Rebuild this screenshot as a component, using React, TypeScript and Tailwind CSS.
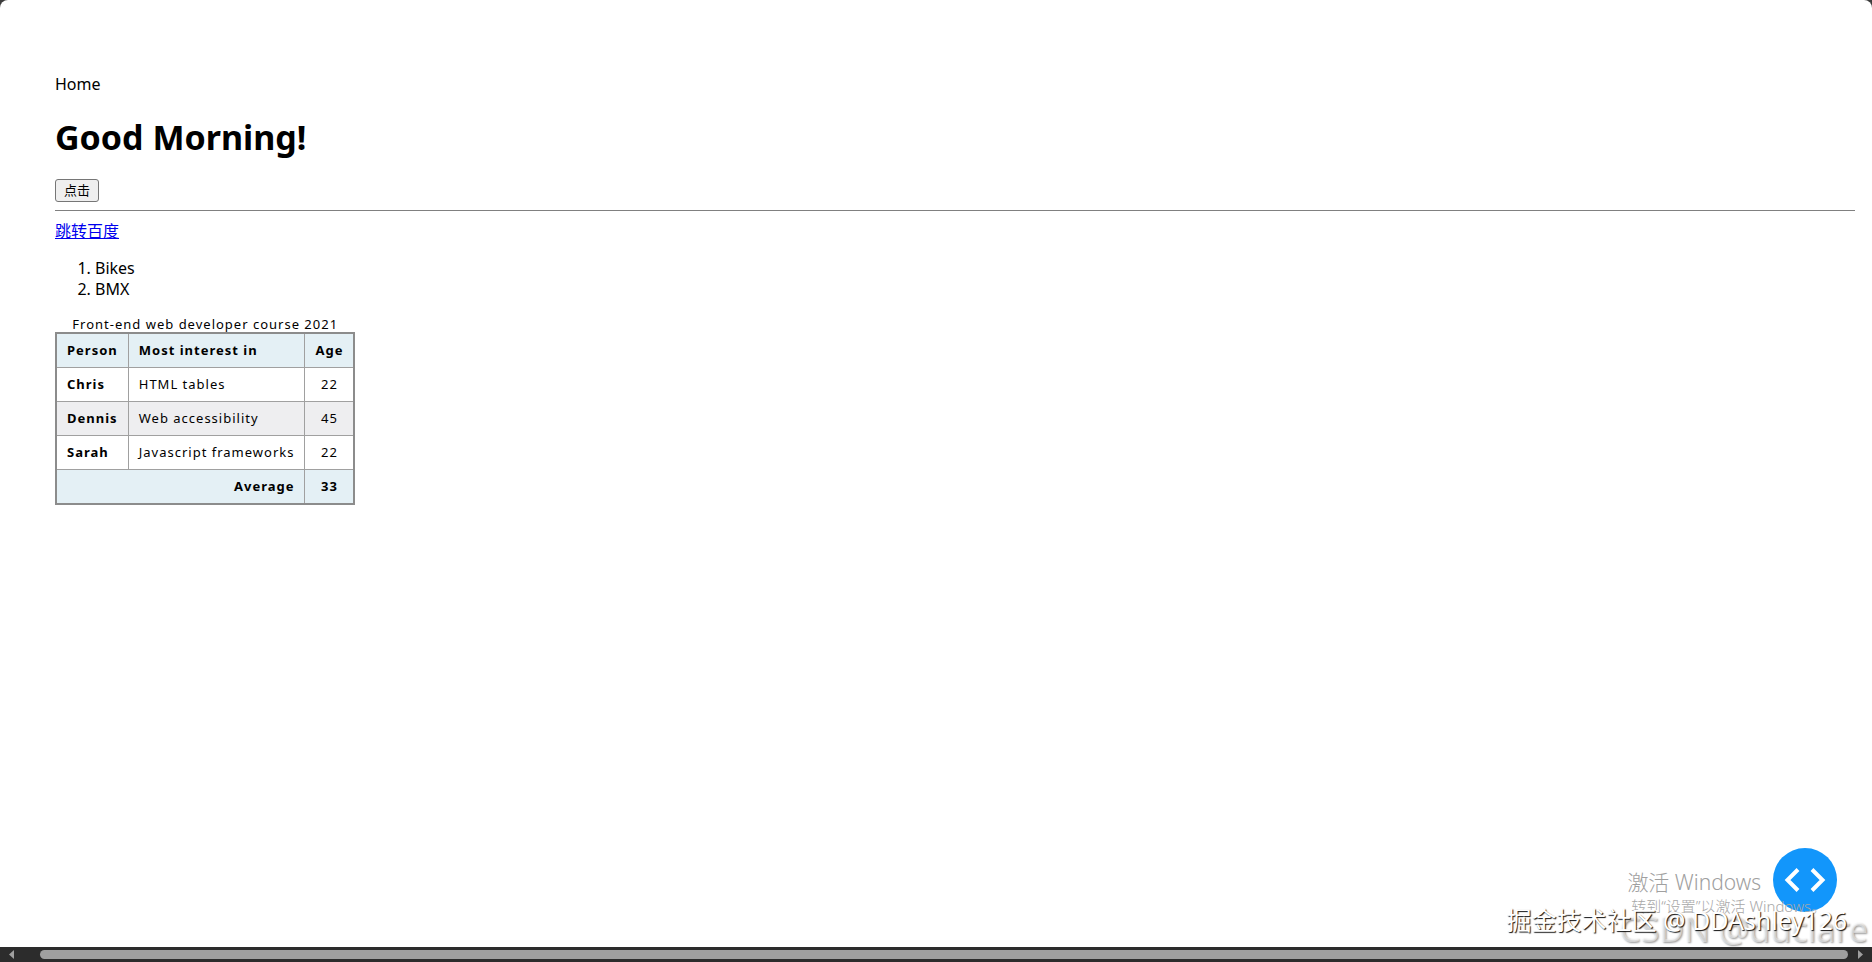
import React from 'react'

interface PersonRowProps {
    name: string,
    interest: string,
    age: number,
}

const people: PersonRowProps[] = [
    { name: 'Chris', interest: 'HTML tables', age: 22 },
    { name: 'Dennis', interest: 'Web accessibility', age: 45 },
    { name: 'Sarah', interest: 'Javascript frameworks', age: 22 },
]

const PersonRow = ({ name, interest, age }: PersonRowProps) => {
    return (
        <tr className="even:bg-[#eeeef0]">
            <th scope="row" className="border border-[#a0a0a0] px-[10px] py-2 text-left">{name}</th>
            <td className="border border-[#a0a0a0] px-[10px] py-2">{interest}</td>
            <td className="border border-[#a0a0a0] px-[10px] py-2 text-center">{age}</td>
        </tr>
    )
}

const CourseTable = () => {
    return (
        <table className="mt-4 border-collapse border-2 border-[#8c8c8c] text-[13px] leading-[17px] tracking-[1px]">
            <caption className="leading-4">Front-end web developer course 2021</caption>
            <thead className="bg-[#e4f0f5]">
                <tr>
                    <th scope="col" className="border border-[#a0a0a0] px-[10px] py-2 text-left">Person</th>
                    <th scope="col" className="border border-[#a0a0a0] px-[10px] py-2 text-left">Most interest in</th>
                    <th scope="col" className="border border-[#a0a0a0] px-[10px] py-2 text-center">Age</th>
                </tr>
            </thead>
            <tbody>
                {people.map((person) => (
                    <PersonRow key={person.name} {...person} />
                ))}
            </tbody>
            <tfoot className="bg-[#e4f0f5]">
                <tr>
                    <th scope="row" colSpan={2} className="border border-[#a0a0a0] px-[10px] py-2 text-right">Average</th>
                    <td className="border border-[#a0a0a0] px-[10px] py-2 text-center font-bold">33</td>
                </tr>
            </tfoot>
        </table>
    )
}

const Watermarks = () => {
    return (
        <div className="pointer-events-none absolute inset-0 whitespace-nowrap">
            <p className="absolute right-[111px] bottom-[51px] text-[21px] leading-7 font-light text-[#a0a0a0]">激活 Windows</p>
            <p className="absolute right-[46px] bottom-[31px] text-[15px] leading-5 font-light text-[#a8a8a8]">转到“设置”以激活 Windows。</p>
            <p className="absolute right-1 bottom-0 text-[34px] leading-9 text-white/50 [text-shadow:1px_1px_2px_#999999]">CSDN @duclare</p>
            <p className="absolute right-[25px] bottom-[11px] text-[25px] leading-8 text-white [text-shadow:1px_1px_1px_#111111]">掘金技术社区 @ DDAshley126</p>
        </div>
    )
}

const Scrollbar = () => {
    return (
        <div className="flex h-[15px] items-center bg-[#2c2c2c] px-[9px]">
            <svg className="h-[9px] w-[5px]" viewBox="0 0 5 9" fill="#9f9f9f"><path d="M5 0v9L0 4.5z" /></svg>
            <div className="mr-[10px] ml-[26px] h-[9px] flex-1 rounded-full bg-[#9f9f9f]" />
            <svg className="h-[9px] w-[5px]" viewBox="0 0 5 9" fill="#9f9f9f"><path d="M0 0v9l5-4.5z" /></svg>
        </div>
    )
}

const App = () => {
    return (
        <div className="flex min-h-screen flex-col bg-[#3c3c3c] font-['Noto_Sans','Noto_Sans_CJK_SC',sans-serif] text-base leading-[21px] text-black">
            <div className="relative flex-1 rounded-t-lg bg-white">
                <main className="pt-[74px] pr-[17px] pl-[55px]">
                    <div>Home</div>
                    <h1 className="mt-[21px] text-[34px] leading-[43px] font-bold">Good Morning!</h1>
                    <button type="button" className="mt-5 block rounded-[3px] border border-[#767676] bg-[#efefef] px-2 text-[13px] leading-[21px]">点击</button>
                    <hr className="mt-2 mb-[10px] border-t-0 border-b border-[#808080]" />
                    <a href="https://www.baidu.com" className="block w-fit text-[#0000ee] underline">跳转百度</a>
                    <ol className="mt-4 list-decimal pl-10">
                        <li>Bikes</li>
                        <li>BMX</li>
                    </ol>
                    <CourseTable />
                </main>
                <button type="button" aria-label="Code" className="absolute right-[35px] bottom-[35px] flex size-16 items-center justify-center rounded-full bg-[#1296fb]">
                    <svg className="h-6 w-[42px]" viewBox="0 0 42 24" fill="none" stroke="white" strokeWidth="4">
                        <path d="M14 1.5 3.5 12 14 22.5M28 1.5 38.5 12 28 22.5" />
                    </svg>
                </button>
                <Watermarks />
            </div>
            <Scrollbar />
        </div>
    )
}

export default App
